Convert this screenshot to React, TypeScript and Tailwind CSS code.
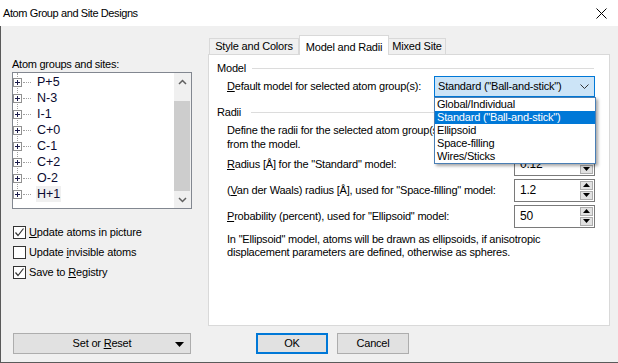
import React from "react";

const items = ["P+5", "N-3", "I-1", "C+0", "C-1", "C+2", "O-2", "H+1"];

function Check({ checked }: { checked: boolean }) {
  return (
    <div className="w-[13px] h-[13px] border border-[#333333] bg-white flex items-center justify-center shrink-0">
      {checked && (
        <svg width="11" height="11" viewBox="0 0 11 11">
          <polyline points="1.5,5.5 4,8.5 9.5,1.5" fill="none" stroke="#333" strokeWidth="1.2" />
        </svg>
      )}
    </div>
  );
}

function Spin({ value }: { value: string }) {
  return (
    <div className="w-[81px] h-[23px] border border-[#7a7a7a] bg-white flex items-center">
      <div className="flex-1 pl-[5px] text-[12px]">{value}</div>
      <div className="flex flex-col gap-[1px] mr-[1px]">
        <div className="w-[13px] h-[9px] border border-[#adadad] bg-[#e1e1e1] flex items-center justify-center">
          <svg width="7" height="4" viewBox="0 0 7 4"><polygon points="0,4 7,4 3.5,0" fill="#000" /></svg>
        </div>
        <div className="w-[13px] h-[9px] border border-[#adadad] bg-[#e1e1e1] flex items-center justify-center">
          <svg width="7" height="4" viewBox="0 0 7 4"><polygon points="0,0 7,0 3.5,4" fill="#000" /></svg>
        </div>
      </div>
    </div>
  );
}

export default function App() {
  return (
    <div className="relative w-[618px] h-[363px] overflow-hidden font-['Liberation_Sans',Arial,sans-serif] text-[11px] tracking-[-0.2px] text-black select-none whitespace-nowrap">
      {/* title bar */}
      <div className="h-[26px] bg-white flex items-center pl-[3px] pr-[11px]">
        <div className="text-[11px] tracking-[-0.4px] pt-[1px]">Atom Group and Site Designs</div>
        <div className="ml-auto">
          <svg width="11" height="11" viewBox="0 0 11 11">
            <line x1="0.5" y1="0.5" x2="10.5" y2="10.5" stroke="#000" strokeWidth="1" />
            <line x1="10.5" y1="0.5" x2="0.5" y2="10.5" stroke="#000" strokeWidth="1" />
          </svg>
        </div>
      </div>

      {/* body */}
      <div className="h-[337px] bg-[#f0f0f0] flex border-l border-b border-[#5a5a5a]">
        {/* left column */}
        <div className="w-[207px] shrink-0 pl-[11px] flex flex-col">
          <div className="mt-[32px] h-[13px] leading-[13px] text-[11px] tracking-[-0.25px]">Atom groups and sites:</div>
          <div className="mt-[1px] w-[180px] h-[137px] border border-[#828790] bg-white flex">
            <div className="flex-1 relative pt-[1px]">
              <div className="absolute left-[4px] top-[0px] h-[122px] border-l border-dotted border-[#a0a0a0]" />
              {items.map((it, i) => (
                <div key={it} className="h-[16px] flex items-center relative">
                  <div className="w-[9px] h-[9px] border border-[#919191] bg-white flex items-center justify-center z-10">
                    <svg width="7" height="7" viewBox="0 0 7 7">
                      <line x1="1" y1="3.5" x2="6" y2="3.5" stroke="#1a1a4a" strokeWidth="1" />
                      <line x1="3.5" y1="1" x2="3.5" y2="6" stroke="#1a1a4a" strokeWidth="1" />
                    </svg>
                  </div>
                  <div className="w-[8px] ml-[1px] border-t border-dotted border-[#a0a0a0]" />
                  <div
                    className={
                      i === 7
                        ? "ml-[5px] px-[1px] h-[16px] leading-[16px] bg-[#f0f0f0] text-[12.5px] tracking-normal text-[#0a0a30]"
                        : "ml-[5px] px-[1px] h-[16px] leading-[16px] text-[12.5px] tracking-normal text-[#0a0a30]"
                    }
                  >
                    {it}
                  </div>
                </div>
              ))}
            </div>
            <div className="w-[17px] bg-[#f0f0f0] flex flex-col">
              <div className="h-[17px] flex items-center justify-center">
                <svg width="9" height="6" viewBox="0 0 9 6"><polyline points="1,5 4.5,1.5 8,5" fill="none" stroke="#606060" strokeWidth="1.5" /></svg>
              </div>
              <div className="flex-1 pt-[11px] flex flex-col">
                <div className="h-[90px] w-[16px] bg-[#cdcdcd]" />
              </div>
              <div className="h-[17px] flex items-center justify-center">
                <svg width="9" height="6" viewBox="0 0 9 6"><polyline points="1,1 4.5,4.5 8,1" fill="none" stroke="#606060" strokeWidth="1.5" /></svg>
              </div>
            </div>
          </div>

          <div className="mt-[13px] flex flex-col text-[11px] tracking-[-0.15px]">
            <div className="h-[20px] flex items-center gap-[3px] ml-[1px]">
              <Check checked />
              <span><span className="underline">U</span>pdate atoms in picture</span>
            </div>
            <div className="h-[20px] flex items-center gap-[3px] ml-[1px]">
              <Check checked={false} />
              <span>Update <span className="underline">i</span>nvisible atoms</span>
            </div>
            <div className="h-[20px] flex items-center gap-[3px] ml-[1px]">
              <Check checked />
              <span>Save to <span className="underline">R</span>egistry</span>
            </div>
          </div>

          <div className="mt-auto mb-[8px] ml-[1px] w-[178px] h-[21px] border border-[#adadad] bg-[#e1e1e1] flex items-center relative">
            <div className="flex-1 text-center">Set or <span className="underline">R</span>eset</div>
            <svg className="absolute right-[6px] top-[8px]" width="9" height="5" viewBox="0 0 9 5"><polygon points="0,0 9,0 4.5,5" fill="#000" /></svg>
          </div>
        </div>

        {/* right column */}
        <div className="flex-1 flex flex-col pr-[8px]">
          <div className="mt-[9px] h-[19px] flex items-end pl-[1px] relative z-10">
            <div className="w-[90px] h-[16px] border border-b-0 border-[#d9d9d9] bg-[#f0f0f0] flex items-center justify-center">Style and Colors</div>
            <div className="w-[90px] h-[20px] -mb-[1px] border border-b-0 border-[#d9d9d9] bg-white flex items-start pt-[3px] justify-center">Model and Radii</div>
            <div className="w-[58px] h-[16px] -ml-[1px] border border-b-0 border-[#d9d9d9] bg-[#f0f0f0] flex items-center justify-center">Mixed Site</div>
          </div>
          <div className="h-[272px] border border-[#d9d9d9] bg-white pl-[8px] pt-[7px] flex flex-col">
            <div className="h-[13px] flex items-center pr-[15px]">
              <span className="leading-[13px]">Model</span>
              <div className="flex-1 ml-[6px] border-t border-[#dcdcdc]" />
            </div>
            <div className="mt-[1px] h-[21px] flex items-center pl-[10px]">
              <div className="w-[207px]"><span className="underline">D</span>efault model for selected atom group(s):</div>
              <div className="w-[161px] h-[21px] border border-[#0078d7] bg-[#cce4f7] flex items-center pl-[3px] pr-[5px]">
                <span className="flex-1">Standard ("Ball-and-stick")</span>
                <svg width="9" height="5" viewBox="0 0 9 5"><polyline points="0.5,0.5 4.5,4.5 8.5,0.5" fill="none" stroke="#333" strokeWidth="1" /></svg>
              </div>
            </div>
            <div className="mt-[9px] h-[13px] flex items-center pr-[15px]">
              <span className="leading-[13px]">Radii</span>
              <div className="flex-1 ml-[10px] border-t border-[#dcdcdc]" />
            </div>
            <div className="mt-[4px] pl-[10px] leading-[14px]">
              <div className="w-[207px] overflow-hidden">Define the radii for the selected atom group(s).</div>
              <div>from the model.</div>
            </div>
            <div className="pl-[10px] flex flex-col">
              <div className="h-[26px] flex items-center">
                <div className="w-[287px]"><span className="underline">R</span>adius [Å] for the "Standard" model:</div>
                <Spin value="0.12" />
              </div>
              <div className="h-[26px] flex items-center">
                <div className="w-[287px]">(<span className="underline">V</span>an der Waals) radius [Å], used for "Space-filling" model:</div>
                <Spin value="1.2" />
              </div>
              <div className="h-[26px] flex items-center">
                <div className="w-[287px]"><span className="underline">P</span>robability (percent), used for "Ellipsoid" model:</div>
                <Spin value="50" />
              </div>
            </div>
            <div className="mt-[4px] pl-[10px] leading-[13px]">
              <div>In "Ellipsoid" model, atoms will be drawn as ellipsoids, if anisotropic</div>
              <div>displacement parameters are defined, otherwise as spheres.</div>
            </div>
          </div>
          <div className="mt-[7px] flex gap-[9px] pl-[48px]">
            <div className="w-[72px] h-[21px] border-2 border-[#0078d7] bg-[#e1e1e1] flex items-center justify-center">OK</div>
            <div className="w-[72px] h-[21px] border border-[#adadad] bg-[#e1e1e1] flex items-center justify-center">Cancel</div>
          </div>
        </div>
      </div>

      {/* dropdown list overlay */}
      <div className="absolute left-[434px] top-[97px] w-[162px] h-[67px] bg-white border border-[#4a7fb5] shadow-[2px_2px_3px_rgba(0,0,0,0.35)]">
        <div className="h-[13px] leading-[13px] px-[2px]">Global/Individual</div>
        <div className="h-[13px] leading-[13px] px-[2px] bg-[#0078d7] text-white">Standard ("Ball-and-stick")</div>
        <div className="h-[13px] leading-[13px] px-[2px]">Ellipsoid</div>
        <div className="h-[13px] leading-[13px] px-[2px]">Space-filling</div>
        <div className="h-[13px] leading-[13px] px-[2px]">Wires/Sticks</div>
      </div>
    </div>
  );
}
